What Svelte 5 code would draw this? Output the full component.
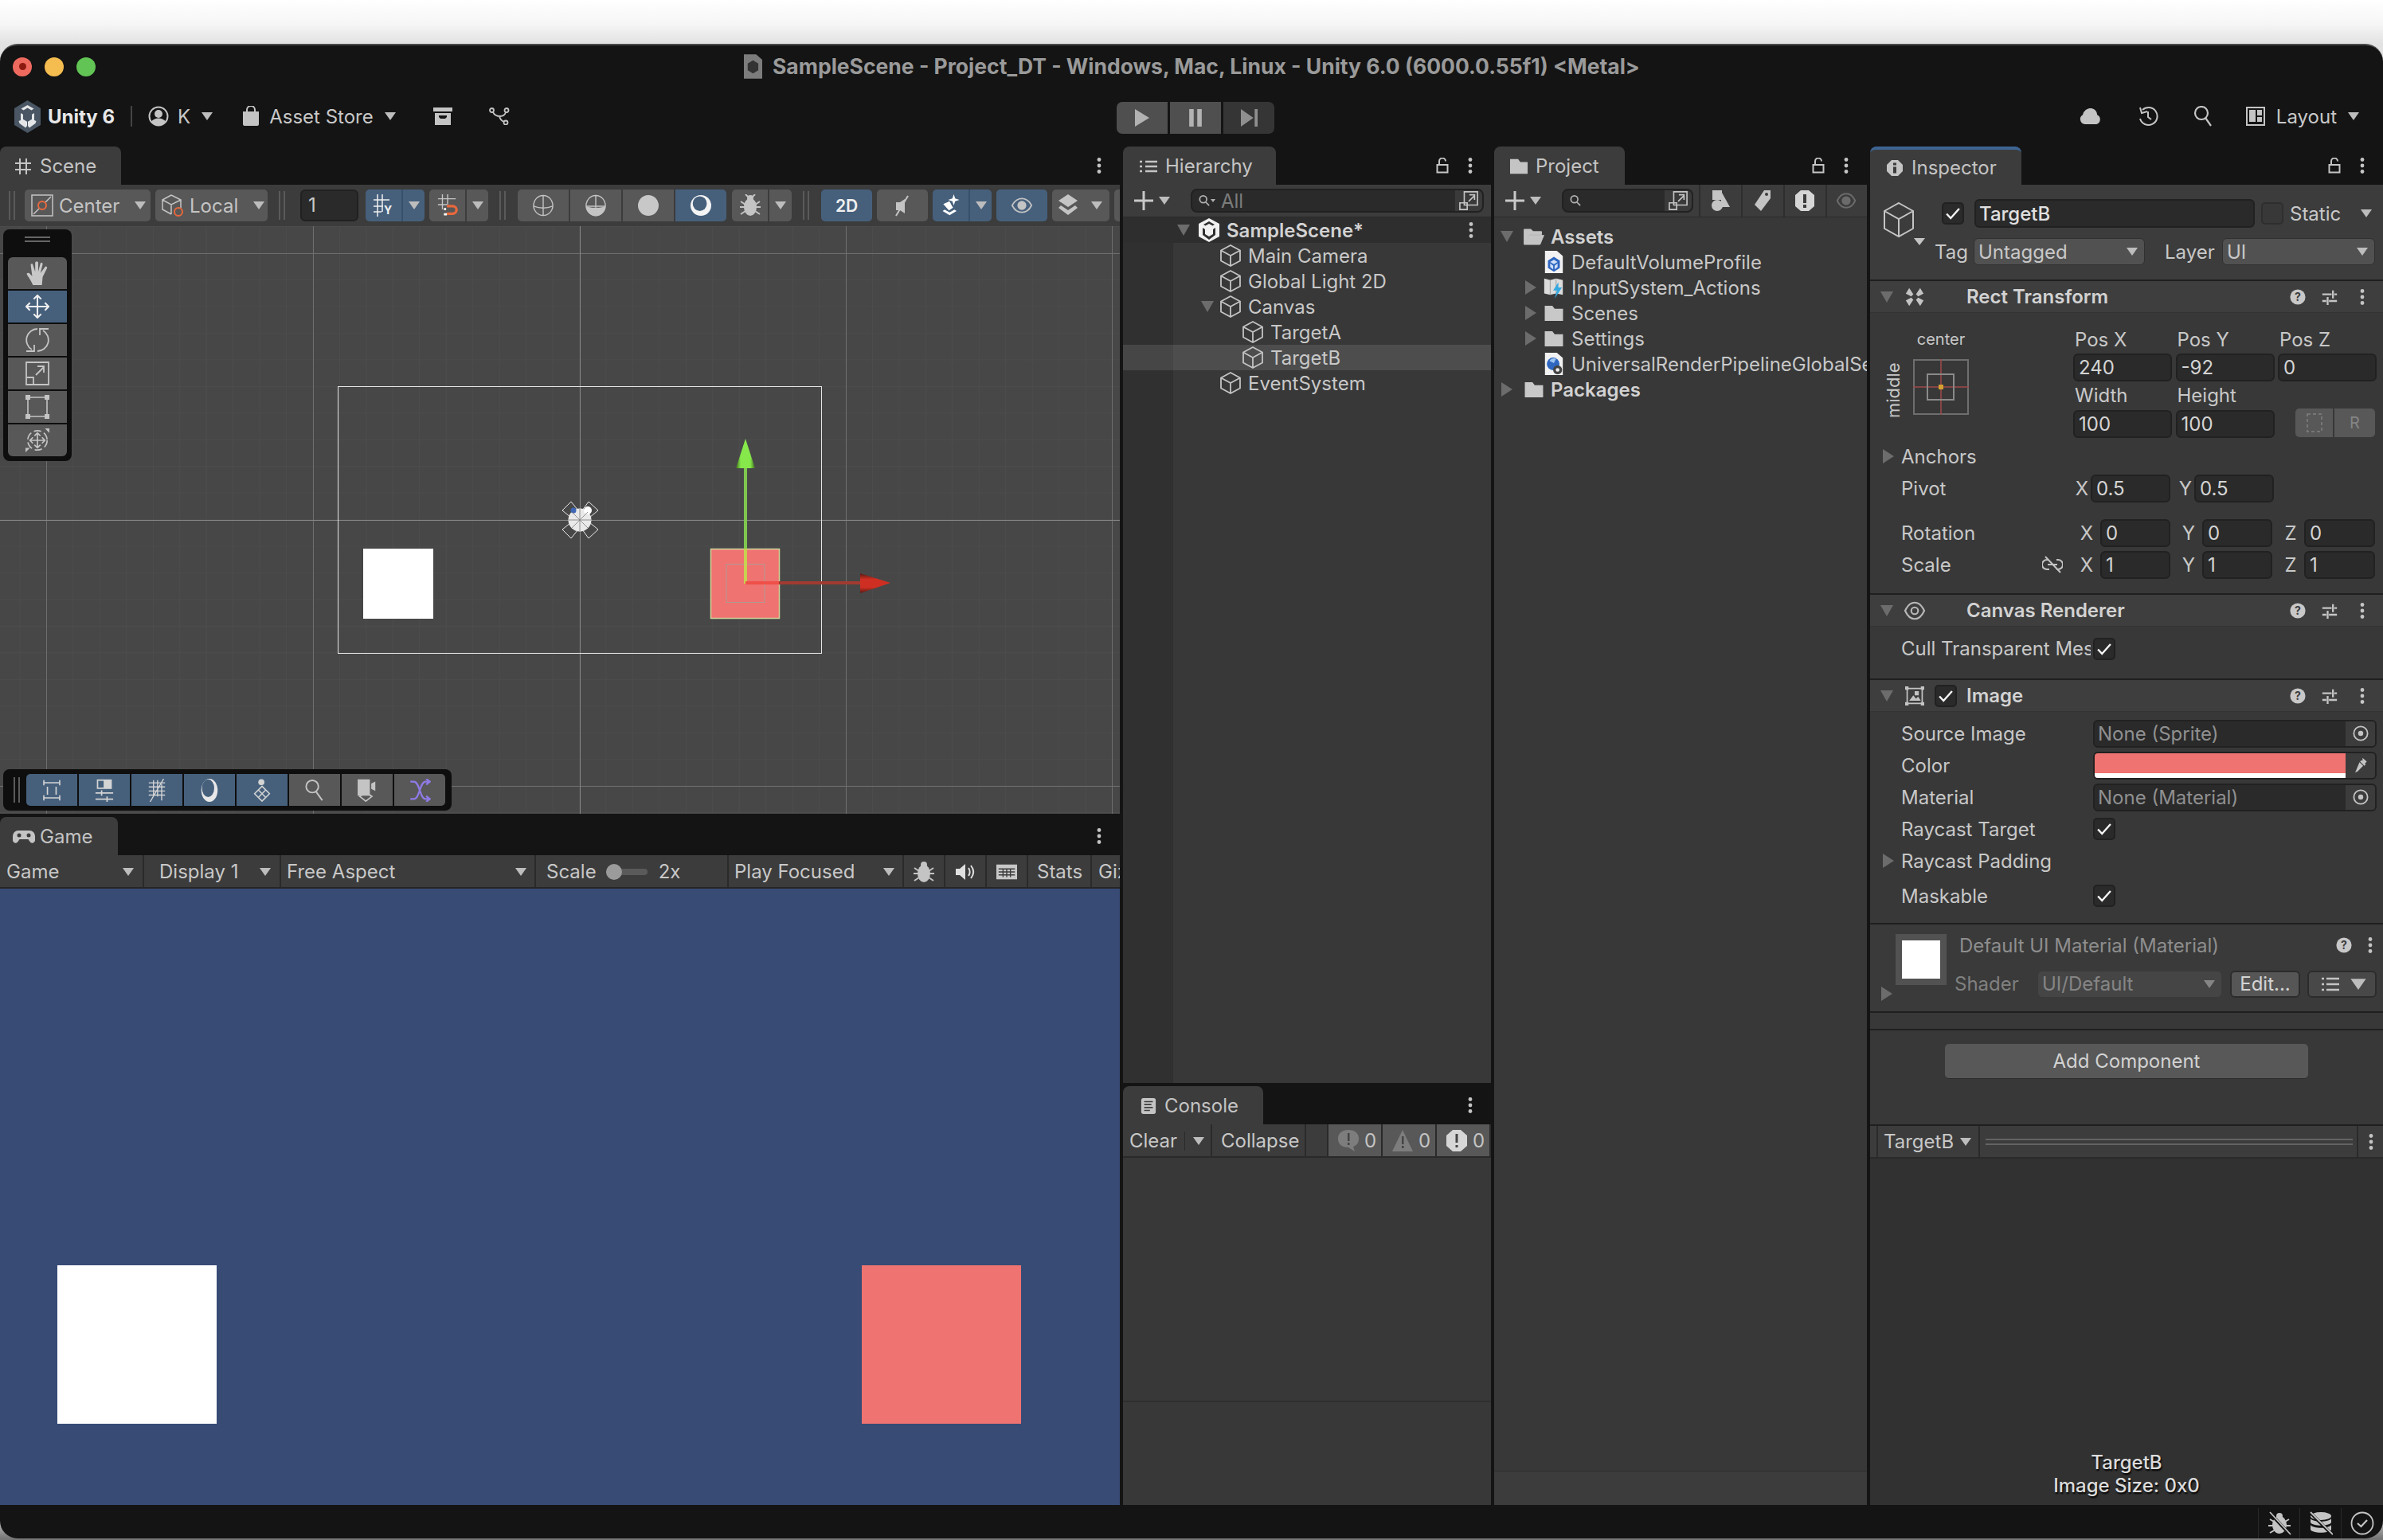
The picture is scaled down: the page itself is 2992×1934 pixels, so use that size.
<script>
	const W = 1406;
	const H = 738;
	// scene grid, 33.45px minor pitch
	const minorX = Array.from({ length: 44 }, (_, i) => 25.05 + i * 33.45);
	const minorY = Array.from({ length: 24 }, (_, i) => 0.6 + i * 33.45);
	const majorX = [58.5, 393.5, 1062.5, 1396.5];
	const majorY = [34.5, 703.5];

	const hierarchy = [
		{ name: 'Main Camera', depth: 1 },
		{ name: 'Global Light 2D', depth: 1 },
		{ name: 'Canvas', depth: 1, open: true },
		{ name: 'TargetA', depth: 2 },
		{ name: 'TargetB', depth: 2, selected: true },
		{ name: 'EventSystem', depth: 1 }
	];
</script>

{#snippet tri()}
	<svg class="tri" viewBox="0 0 16 12"><path d="M1 1h14L8 11z" /></svg>
{/snippet}

{#snippet arrowDown()}
	<svg class="arrow" viewBox="0 0 16 18"><path d="M0 2h16L8 16z" /></svg>
{/snippet}

{#snippet arrowRight()}
	<svg class="arrow" viewBox="0 0 16 18"><path d="M1 0l14 9L1 18z" /></svg>
{/snippet}

{#snippet dots()}
	<svg class="dots" viewBox="0 0 6 20"><circle cx="3" cy="2.500" r="2.400" /><circle cx="3" cy="10" r="2.400" /><circle cx="3" cy="17.500" r="2.400" /></svg>
{/snippet}

{#snippet lock()}
	<svg class="lock" viewBox="0 0 16 20"><path d="M4 8V4.500a4 4 0 0 1 8 0M1.500 9h13v9.500h-13z" /></svg>
{/snippet}

{#snippet cube()}
	<svg class="cube" viewBox="0 0 28 30"><path d="M14 2l12 6.500v13L14 28 2 21.500v-13zM2 8.500L14 15l12-6.500M14 15v13" /></svg>
{/snippet}

{#snippet check()}
	<svg class="check" viewBox="0 0 28 28"><path d="M5.500 14.500l5.500 6L22.500 7.500" /></svg>
{/snippet}

{#snippet help()}
	<svg class="help" viewBox="0 0 24 24"><circle cx="12" cy="12" r="11.500" /><text x="12" y="18.500" text-anchor="middle">?</text></svg>
{/snippet}

{#snippet sliders()}
	<svg class="sliders" viewBox="0 0 24 24"><path d="M1 8h14M19 8h4M1 18h6M11 18h12M17 2v12M9 12v12" /></svg>
{/snippet}

{#snippet target()}
	<svg class="target" viewBox="0 0 22 22"><circle cx="11" cy="11" r="9.500" /><circle class="pt" cx="11" cy="11" r="3.500" /></svg>
{/snippet}

{#snippet search()}
	<svg class="ticon" viewBox="0 0 16 16"><circle cx="6.500" cy="6" r="5" /><path d="M10 10l5 5" /></svg>
{/snippet}

{#snippet expand()}
	<svg class="expand" viewBox="0 0 26 26"><path d="M7 1h18v18H7zM1 16h10v9H1zM13 14l8-8M14 5h7v7" /></svg>
{/snippet}

{#snippet folder()}
	<svg class="ficon" viewBox="0 0 26 22"><path d="M1 1h10l3 4h11v16H1z" /></svg>
{/snippet}

{#snippet unityMark(back, fore)}
	<polygon points="16.500,0 33,10 33,31 16.500,41 0,31 0,10" fill={back} />
	<path d="M16.500 6l8 4.500-3 2-5-3-5 3-3-2zM8 16l3 1.800v6l5 3V32l-1.800 2.500L6.500 29 5.500 26l2.500-1zM25 16l-3 1.800v6l-5 3V32l1.800 2.500 7.700-5.500 1-3-2.500-1z" fill={fore} />
{/snippet}

{#snippet tabMenu()}
	<div class="tab-tools">
		{@render lock()}
		{@render dots()}
	</div>
{/snippet}

<div class="window">
	<header class="titlebar">
		<div class="lights">
			<span class="light red"><i></i></span>
			<span class="light yellow"></span>
			<span class="light green"></span>
		</div>
		<div class="title">
			<svg class="doc" viewBox="0 0 24 32">
				<path d="M0 0h16l8 7v25H0z" fill="#7c7c7c" />
				<g transform="translate(5 8) scale(.42)"><polygon points="16.500,0 33,10 33,31 16.500,41 0,31 0,10" fill="#333" /></g>
			</svg>
			<span>SampleScene - Project_DT - Windows, Mac, Linux - Unity 6.0 (6000.0.55f1) &lt;Metal&gt;</span>
		</div>
	</header>

	<div class="toolbar">
		<div class="tb-left">
			<svg class="logo" viewBox="0 0 33 41">{@render unityMark('#4a5663', '#e4e6e8')}</svg>
			<span class="brand">Unity 6</span>
			<span class="vsep"></span>
			<svg class="acct" viewBox="0 0 26 26">
				<circle cx="13" cy="13" r="11.500" fill="none" stroke="#c4c4c4" stroke-width="2" />
				<circle cx="13" cy="10" r="5" fill="#c4c4c4" />
				<path d="M4 20c3-6 15-6 18 0l-4 4H8z" fill="#c4c4c4" />
			</svg>
			<span class="acct-k">K</span>
			{@render tri()}
			<svg class="bag" viewBox="0 0 20 24"><path d="M5 7V4a5 5 0 0 1 10 0v3" fill="none" stroke="#c4c4c4" stroke-width="2" /><path d="M0 6h20v16a2 2 0 0 1-2 2H2a2 2 0 0 1-2-2z" fill="#c4c4c4" /></svg>
			<span class="store">Asset Store</span>
			{@render tri()}
			<svg class="archive" viewBox="0 0 24 22"><path d="M0 0h24v5H0zM2 7h20v15H2z" fill="#c4c4c4" /><path d="M7 10h10v2l-2 2H9l-2-2z" fill="#141414" /></svg>
			<svg class="graph" viewBox="0 0 26 22" fill="none" stroke="#c4c4c4" stroke-width="1.800"><circle cx="3.500" cy="3.500" r="2.500" /><circle cx="22" cy="3.500" r="2.500" /><circle cx="21" cy="19" r="2.500" /><path d="M5 6c2 4 5 5 9 5 3 0 6-2 7-5M13 11c1 4 3 6 6 7" /></svg>
		</div>
		<div class="play">
			<button class="pb"><svg viewBox="0 0 16 16" preserveAspectRatio="none"><path d="M0 0l16 8-16 8z" /></svg></button>
			<button class="pb"><svg viewBox="0 0 16 16" preserveAspectRatio="none"><path d="M1 0h5v16H1zM10 0h5v16h-5z" /></svg></button>
			<button class="pb dim"><svg viewBox="0 0 20 16" preserveAspectRatio="none"><path d="M0 0l15 8-15 8zM16.500 0H20v16h-3.500z" /></svg></button>
		</div>
		<div class="tb-right">
			<svg class="cloud" viewBox="0 0 30 22"><path d="M7 22a7 7 0 0 1-3-13A11 11 0 0 1 16 0a10 10 0 0 1 8 9 7 7 0 0 1-1 13z" fill="#c4c4c4" /></svg>
			<svg class="hist" viewBox="0 0 26 26" fill="none" stroke="#c4c4c4" stroke-width="2"><path d="M6 5a11 11 0 1 1-3 11M3 2l2 7 7-2M13 7v7l4 3" /></svg>
			<svg class="mag" viewBox="0 0 26 26" fill="none" stroke="#c4c4c4" stroke-width="2.200"><circle cx="10" cy="9" r="8" /><path d="M15 15l7 10" /></svg>
			<svg class="layout" viewBox="0 0 24 24"><path d="M1 1h22v22H1z" fill="none" stroke="#c4c4c4" stroke-width="2" /><path d="M4 4h8v15H4zM14 4h6v7h-6zM14 13h6v6h-6z" fill="#c4c4c4" /></svg>
			<span class="lay-text">Layout</span>
			{@render tri()}
		</div>
	</div>

	<div class="main">
		<div class="col col-left">
			<section class="panel scene">
				<div class="tabrow">
					<div class="tab tab-scene">
						<svg class="tab-ic" viewBox="0 0 20 20" fill="none" stroke="#c4c4c4" stroke-width="2"><path d="M6 0v20M14 0v20M0 6h20M0 14h20" /></svg>
						<span>Scene</span>
					</div>
					<div class="tab-tools">{@render dots()}</div>
				</div>
				<div class="scene-tools">
					<span class="handle"></span>
					<button class="sb w-center">
						<svg class="pad-ic" viewBox="0 0 28 28" fill="none"><rect x="1" y="1" width="26" height="26" stroke="#c4c4c4" stroke-width="1.500" /><path d="M3 25l7-7M18 10l7-7" stroke="#c4c4c4" stroke-width="1.500" /><circle cx="14" cy="14" r="5" stroke="#e8683c" stroke-width="2" /></svg>
						<span>Center</span>{@render tri()}
					</button>
					<button class="sb w-local">
						<svg class="pad-ic" viewBox="0 0 28 28" fill="none" stroke="#c4c4c4" stroke-width="1.500"><path d="M12 1l12 6v10M12 1L1 7v12l11 6M1 7l11 6 12-6M12 13v12" /><circle cx="21" cy="22" r="5" stroke="#e8683c" stroke-width="2" /></svg>
						<span>Local</span>{@render tri()}
					</button>
					<span class="handle"></span>
					<div class="num-input">1</div>
					<div class="split on w-snap ml3">
						<span class="sp-main">
							<svg class="sq-ic" viewBox="0 0 26 28" fill="none" stroke="#f0f0f0" stroke-width="1.500"><path d="M5 0v28M11 0v22M0 7h20M0 15h12M0 22h10" /><text x="13" y="25" class="y">Y</text></svg>
						</span>
						<span class="sp-tri">{@render tri()}</span>
					</div>
					<div class="split w-snap">
						<span class="sp-main">
							<svg class="sq-ic" viewBox="0 0 26 30" fill="none"><path d="M6 0v20M13 0v14M0 6h24M0 14h12" stroke="#c4c4c4" stroke-width="1.500" /><path d="M12 16h8a5 5 0 0 1 0 10h-8" stroke="#e8683c" stroke-width="3.500" /><path d="M8 20h3M8 27h4" stroke="#fff" stroke-width="3" /></svg>
						</span>
						<span class="sp-tri">{@render tri()}</span>
					</div>
					<span class="handle"></span>
					<div class="group">
						<button class="gb"><svg class="sq-ic" viewBox="0 0 28 28" fill="none" stroke="#c4c4c4" stroke-width="1.500"><ellipse cx="14" cy="14" rx="13" ry="13.500" /><path d="M1 15c8 3 18 3 26 0M14 1v26" /></svg></button>
						<button class="gb"><svg class="sq-ic" viewBox="0 0 28 28"><path d="M1 15c8 3 18 3 26 0a13 13.500 0 0 1-26 0z" fill="#c4c4c4" /><path d="M11 17v10h6V17z" fill="#c4c4c4" /><ellipse cx="14" cy="14" rx="13" ry="13.500" fill="none" stroke="#c4c4c4" stroke-width="1.500" /><path d="M14 1v16M1 15h26" stroke="#c4c4c4" stroke-width="1.500" /></svg></button>
						<button class="gb"><svg class="sq-ic" viewBox="0 0 28 28"><ellipse cx="14" cy="14" rx="14" ry="14" fill="#c8c8c8" /></svg></button>
						<button class="gb on"><svg class="sq-ic" viewBox="0 0 28 28"><ellipse cx="14" cy="14" rx="14" ry="14" fill="#f4f4f4" /><ellipse cx="12.500" cy="11.500" rx="9.500" ry="10" fill="#46607c" /></svg></button>
					</div>
					<div class="split w-bug ml1">
						<span class="sp-main">
							<svg class="sq-ic" viewBox="0 0 26 28"><ellipse cx="13" cy="16" rx="8" ry="11" fill="#c4c4c4" /><circle cx="13" cy="5" r="4" fill="#c4c4c4" /><path d="M1 9l6 4M25 9l-6 4M0 16h6M26 16h-6M1 25l6-4M25 25l-6-4M7 0l3 3M19 0l-3 3" stroke="#c4c4c4" stroke-width="2" /></svg>
						</span>
						<span class="sp-tri">{@render tri()}</span>
					</div>
					<span class="handle"></span>
					<button class="sb on sq sb-text">2D</button>
					<button class="sb sq"><svg class="sq-ic" viewBox="0 0 24 28"><path d="M4 10h5l6-4v18l-6-4H4z" fill="#c4c4c4" /><path d="M19 2L4 27" stroke="#c4c4c4" stroke-width="2" /></svg></button>
					<div class="split on w-snap">
						<span class="sp-main">
							<svg class="sq-ic" viewBox="0 0 26 32"><path d="M17 0l2 6 6 2-6 2-2 6-2-6-6-2 6-2z" fill="#fff" /><path d="M2 14l9-4 3 6 2 3-6 4zM1 24l10 6 10-6-3-2-7 4-7-4z" fill="#fff" /></svg>
						</span>
						<span class="sp-tri">{@render tri()}</span>
					</div>
					<button class="sb on sq"><svg class="sq-ic" viewBox="0 0 30 24"><path d="M1 12C5 4 10 2 15 2s10 2 14 10c-4 8-9 10-14 10S5 20 1 12z" fill="none" stroke="#c4c4c4" stroke-width="2" /><circle cx="15" cy="12" r="6.500" fill="#c4c4c4" /></svg></button>
					<div class="split w-lay">
						<span class="sp-main pl"><svg class="sq-ic" viewBox="0 0 24 28"><path d="M12 0l12 8-12 8L0 8zM3 14l9 6 9-6 3 3-12 9L0 17z" fill="#c4c4c4" /></svg></span>
						<span class="sp-tri nosep">{@render tri()}</span>
					</div>
					<button class="sb sq"></button>
				</div>
				<div class="canvas">
					<svg class="gridsvg" viewBox="0 0 {W} {H}">
						<defs>
							<linearGradient id="coneG" x1="0" x2="1" y1="0" y2="0">
								<stop offset="0" stop-color="#3e6a20" />
								<stop offset=".25" stop-color="#86e84a" />
								<stop offset=".75" stop-color="#86e84a" />
								<stop offset="1" stop-color="#3e6a20" />
							</linearGradient>
							<linearGradient id="coneR" x1="0" x2="0" y1="0" y2="1">
								<stop offset="0" stop-color="#551a14" />
								<stop offset=".3" stop-color="#cf2f22" />
								<stop offset=".7" stop-color="#cf2f22" />
								<stop offset="1" stop-color="#551a14" />
							</linearGradient>
						</defs>
						{#each minorX as x}<line x1={x} x2={x} y1="0" y2={H} class="minor" />{/each}
						{#each minorY as y}<line y1={y} y2={y} x1="0" x2={W} class="minor" />{/each}
						{#each majorX as x}<line x1={x} x2={x} y1="0" y2={H} class="major" />{/each}
						{#each majorY as y}<line y1={y} y2={y} x1="0" x2={W} class="major" />{/each}
						<line x1="728.500" x2="728.500" y1="0" y2={H} class="axis" />
						<line y1="369.500" y2="369.500" x1="0" x2={W} class="axis" />

						<rect x="424.500" y="201.500" width="607" height="335" fill="none" stroke="#e6e6e6" stroke-width="1" />
						<rect x="456" y="405" width="88" height="88" fill="#fff" />

						<!-- directional light gizmo -->
						<g fill="none" stroke="#e8e8e8" stroke-width="1">
							<path d="M717 346l-11 11 11 9 9-9zM739 346l12 11-11 9-9-9zM717 392l-11-11 11-9 9 9zM739 392l12-11-11-9-9 9z" />
						</g>
						<circle cx="728" cy="369" r="14.500" fill="#e9e9e9" />
						<circle cx="720" cy="357" r="3.500" fill="#3d66b5" />
						<circle cx="738" cy="357" r="5" fill="#fff" />
						<path d="M728 355v28M714 369h28M718 359l20 20M738 359l-20 20" stroke="#7a7a7a" stroke-width=".8" />

						<rect x="892.500" y="405.500" width="86" height="87" fill="#ef7370" stroke="#cfd59a" stroke-width="1.500" />
						<rect x="912" y="424.500" width="48" height="48" fill="none" stroke="#b09a94" stroke-width="1" />
						<rect x="934" y="304" width="4" height="145" fill="#7fc64e" />
						<rect x="934" y="405" width="4" height="44" fill="#c8d050" />
						<path d="M936 267l12 37h-24z" fill="url(#coneG)" />
						<rect x="936" y="446" width="145" height="4" fill="#a13a31" />
						<rect x="936" y="446" width="42" height="4" fill="#ef5048" />
						<path d="M1118 448l-38 13v-25z" fill="url(#coneR)" />
					</svg>

					<div class="vtools">
						<div class="grip"></div>
						<button class="vt">
							<svg viewBox="0 0 30 32"><path d="M9 32c-2-5-4-8-8-14-1-2 1-3 3-2l4 4L6 5c0-2 3-2 3 0l3 9V2c0-2 4-2 4 0v12l3-11c1-2 3-1 3 1l-3 12 6-8c1-2 3-1 3 1l-6 12-1 11z" fill="#c8c8c8" /></svg>
						</button>
						<button class="vt on">
							<svg viewBox="0 0 32 32" fill="none" stroke="#f0f0f0" stroke-width="2.200"><path d="M16 1v30M1 16h30M11 6l5-5 5 5M11 26l5 5 5-5M6 11l-5 5 5 5M26 11l5 5-5 5" /></svg>
						</button>
						<button class="vt">
							<svg viewBox="0 0 30 30" fill="none" stroke="#c4c4c4" stroke-width="1.800"><path d="M15 29a14 14 0 0 0 7-26M29 1H18v8M15 1A14 14 0 0 0 8 27M1 29h10v-8" /></svg>
						</button>
						<button class="vt">
							<svg viewBox="0 0 30 30" fill="none" stroke="#c4c4c4" stroke-width="1.800"><path d="M1 1h28v28H1zM1 20h9v9M13 17l10-10M15 6h8v8" /></svg>
						</button>
						<button class="vt">
							<svg viewBox="0 0 30 30"><path d="M6 3h18M6 27h18M3 6v18M27 6v18" stroke="#c4c4c4" stroke-width="1.600" /><path d="M0 0h6v6H0zM24 0h6v6h-6zM0 24h6v6H0zM24 24h6v6h-6z" fill="#c4c4c4" /></svg>
						</button>
						<button class="vt">
							<svg viewBox="0 0 32 32" fill="none" stroke="#c4c4c4" stroke-width="1.800"><circle cx="16" cy="16" r="13" stroke-dasharray="10 4" /><path d="M16 6v20M6 16h20M12 10l4-4 4 4M12 22l4 4 4-4M10 12l-4 4 4 4M22 12l4 4-4 4" /><path d="M26 0h6v6zM0 32v-6h6z" fill="#c4c4c4" stroke="none" /></svg>
						</button>
					</div>

					<div class="htools">
						<span class="handle tight"></span>
						<button class="ht on"><svg viewBox="0 0 30 32" fill="none" stroke="#d4d4d4" stroke-width="1.800"><path d="M4 2v7M26 2v7M4 5.500h22M4 23v7M26 23v7M4 26.500h22M9 11v11M21 11v11" /></svg></button>
						<button class="ht on"><svg viewBox="0 0 30 34"><path d="M4 1h22v14H4z" fill="#d4d4d4" /><path d="M6 3h8v10H6z" fill="#46607c" /><path d="M2 21h26M2 30h26M11 17v8M19 26v8" stroke="#d4d4d4" stroke-width="2" /></svg></button>
						<button class="ht on"><svg viewBox="0 0 30 34" fill="none" stroke="#d4d4d4" stroke-width="1.600"><path d="M3 6h24M3 12h24M3 18h24M3 24h24M10 2v22M16 2v24M22 8v24M25 0L5 34" /></svg></button>
						<button class="ht on"><svg viewBox="0 0 24 34"><ellipse cx="12" cy="17" rx="12" ry="17" fill="#e8e8e8" /><ellipse cx="10" cy="14" rx="9" ry="13" fill="#46607c" /></svg></button>
						<button class="ht on"><svg viewBox="0 0 30 34"><circle cx="14" cy="5" r="4.500" fill="#d4d4d4" /><path d="M15 11l11 11-11 11L4 22zM9.500 16.500l11 11M20.500 16.500l-11 11" fill="none" stroke="#d4d4d4" stroke-width="1.800" /></svg></button>
						<button class="ht"><svg viewBox="0 0 26 30" fill="none" stroke="#c4c4c4" stroke-width="2"><circle cx="10" cy="10" r="8" /><path d="M15 17l8 11" /></svg></button>
						<button class="ht"><svg viewBox="0 0 28 34"><path d="M0 1h18v24H0zM20 7l6-3v14l-6-3z" fill="#c4c4c4" /><path d="M12 20l9 6-9 7-9-7z" fill="none" stroke="#c4c4c4" stroke-width="2" /></svg></button>
						<button class="ht"><svg viewBox="0 0 30 32" fill="none" stroke="#8f7ae6" stroke-width="2.500"><path d="M2 4h5c8 0 8 24 16 24h5M2 28h5c8 0 8-24 16-24h5M24 0l5 4-5 4M24 24l5 4-5 4" /></svg></button>
					</div>
				</div>
			</section>

			<section class="panel game">
				<div class="tabrow">
					<div class="tab tab-game">
						<svg class="tab-ic" viewBox="0 0 28 16"><path d="M7 0h14a7 7 0 0 1 7 7v5a3.500 3.500 0 0 1-6.500 2l-2-3h-11l-2 3A3.500 3.500 0 0 1 0 12V7a7 7 0 0 1 7-7z" fill="#c4c4c4" /><circle cx="8" cy="6" r="2.500" fill="#3c3c3c" /><circle cx="20" cy="6" r="2.500" fill="#3c3c3c" /></svg>
						<span>Game</span>
					</div>
					<div class="tab-tools">{@render dots()}</div>
				</div>
				<div class="game-tools">
					<div class="gt g-game"><span>Game</span>{@render tri()}</div>
					<div class="gt g-display"><span>Display 1</span>{@render tri()}</div>
					<div class="gt g-aspect"><span>Free Aspect</span>{@render tri()}</div>
					<div class="gt g-scale">
						<span>Scale</span>
						<span class="slider"><i></i></span>
						<span>2x</span>
					</div>
					<div class="gt g-focus"><span>Play Focused</span>{@render tri()}</div>
					<div class="gt g-ic">
						<svg class="sq-ic" viewBox="0 0 26 28"><ellipse cx="13" cy="16" rx="8" ry="11" fill="#c4c4c4" /><circle cx="13" cy="5" r="4" fill="#c4c4c4" /><path d="M1 9l6 4M25 9l-6 4M0 16h6M26 16h-6M1 25l6-4M25 25l-6-4" stroke="#c4c4c4" stroke-width="2" /></svg>
					</div>
					<div class="gt g-ic">
						<svg class="mini-ic" viewBox="0 0 26 20"><path d="M1 6h5l7-6v20l-7-6H1z" fill="#e0e0e0" /><path d="M17 5c2 3 2 7 0 10M20 2c4 5 4 11 0 16" stroke="#e0e0e0" stroke-width="2" fill="none" /></svg>
					</div>
					<div class="gt g-ic">
						<svg class="mini-ic" viewBox="0 0 28 20"><path d="M0 0h28v20H0z" fill="#c8c8c8" /><path d="M3 6h22M3 10h22M3 14h22M9 6v11M14 6v11M19 6v11" stroke="#3c3c3c" stroke-width="1.500" /></svg>
					</div>
					<div class="gt g-stats"><span>Stats</span></div>
					<div class="gt g-giz"><span>Gizmos</span></div>
				</div>
				<div class="gameview">
					<div class="gbox white"></div>
					<div class="gbox coral"></div>
				</div>
			</section>
		</div>

		<div class="col col-hier">
			<section class="panel hier">
				<div class="tabrow">
					<div class="tab tab-hier">
						<svg class="tab-ic small" viewBox="0 0 22 16"><path d="M0 2h3M0 8h3M0 14h3M7 2h15M7 8h15M7 14h15" stroke="#c4c4c4" stroke-width="2.500" /></svg>
						<span>Hierarchy</span>
					</div>
					{@render tabMenu()}
				</div>
				<div class="tree-tools">
					<svg class="plus" viewBox="0 0 24 24"><path d="M10.500 0h3v10.500H24v3H13.500V24h-3V13.500H0v-3h10.500z" /></svg>
					{@render tri()}
					<div class="searchbox">
						{@render search()}
						<svg class="tinytri" viewBox="0 0 6 6"><path d="M0 1h6L3 5z" /></svg>
						<span class="ph">All</span>
						<span class="sb-end">{@render expand()}</span>
					</div>
				</div>
				<div class="hier-tree">
					<div class="scene-row">
						{@render arrowDown()}
						<svg class="scene-ic" viewBox="0 0 28 30"><path d="M14 0l13 7v16L14 30 1 23V7z" fill="#f0f0f0" /><path d="M14 4l7 4-2.500 1.500-4.500-2.500-4.500 2.500L7 8zM6 12l3 2v6l5 3 5-3v-6l3-2v9l-8 6-8-6z" fill="#2e2e2e" /></svg>
						<b>SampleScene*</b>
						{@render dots()}
					</div>
					{#each hierarchy as item}
						<div class="hrow d{item.depth}" class:selected={item.selected}>
							<span class="arrow-box">
								{#if item.open}{@render arrowDown()}{/if}
							</span>
							{@render cube()}
							<span>{item.name}</span>
						</div>
					{/each}
				</div>
			</section>

			<section class="panel console">
				<div class="tabrow">
					<div class="tab tab-console">
						<svg class="tab-ic small" viewBox="0 0 20 22"><rect width="20" height="22" rx="3" fill="#c4c4c4" /><path d="M4 5h12M4 9h10M4 13h12M4 17h8" stroke="#3c3c3c" stroke-width="1.800" /></svg>
						<span>Console</span>
					</div>
					<div class="tab-tools">{@render dots()}</div>
				</div>
				<div class="console-tools">
					<div class="ct c-clear"><span>Clear</span><i></i>{@render tri()}</div>
					<div class="ct c-coll"><span>Collapse</span></div>
					<div class="ct c-gap"></div>
					<div class="ct c-on">
						<svg class="log-ic" viewBox="0 0 26 27"><path d="M13 0C5 0 0 4 0 11s5 11 13 11l8 5-2-6c5-2 7-5 7-10 0-7-5-11-13-11z" fill="#7d7d7d" /><path d="M12 4h2.500v10H12zM12 16h2.500v3H12z" fill="#444" /></svg>
						<span>0</span>
					</div>
					<div class="ct c-on">
						<svg class="log-ic" viewBox="0 0 26 27"><path d="M13 0l13 27H0z" fill="#7d7d7d" /><path d="M12 8h2.500v10H12zM12 20h2.500v3H12z" fill="#444" /></svg>
						<span>0</span>
					</div>
					<div class="ct c-on">
						<svg class="log-ic" viewBox="0 0 26 27"><path d="M8 0h10l8 7v13l-8 7H8l-8-7V7z" fill="#d6d6d6" /><path d="M11.500 5h3v11h-3zM11.500 19h3v3h-3z" fill="#444" /></svg>
						<span>0</span>
					</div>
				</div>
				<div class="console-list"></div>
				<div class="console-detail"></div>
			</section>
		</div>

		<div class="col col-proj">
			<section class="panel project">
				<div class="tabrow">
					<div class="tab tab-proj">
						<svg class="tab-ic small" viewBox="0 0 24 20"><path d="M0 0h11l3 4h10v16H0z" fill="#c4c4c4" /></svg>
						<span>Project</span>
					</div>
					{@render tabMenu()}
				</div>
				<div class="tree-tools">
					<svg class="plus" viewBox="0 0 24 24"><path d="M10.500 0h3v10.500H24v3H13.500V24h-3V13.500H0v-3h10.500z" /></svg>
					{@render tri()}
					<div class="searchbox short">
						{@render search()}
						<span class="sb-end">{@render expand()}</span>
					</div>
					<span class="pj-ic first"><svg viewBox="0 0 24 26"><path d="M2 0h12v12H2zM14 3l10 18H12z" fill="#c4c4c4" /><circle cx="8" cy="19" r="7" fill="#c4c4c4" /></svg></span>
					<span class="pj-ic"><svg viewBox="0 0 24 26"><path d="M14 0h8v10L10 26 2 18z" fill="#c4c4c4" /><circle cx="17" cy="5" r="2" fill="#3c3c3c" /></svg></span>
					<span class="pj-ic"><svg viewBox="0 0 24 26"><path d="M7 0h10l7 6v14l-7 6H7l-7-6V6z" fill="#d6d6d6" /><path d="M10 5h4v11h-4zM10 18h4v4h-4z" fill="#3c3c3c" /></svg></span>
					<span class="pj-ic eye"><svg viewBox="0 0 30 26"><path d="M1 13C5 4 10 2 15 2s10 2 14 11c-4 9-9 11-14 11S5 22 1 13z" fill="none" stroke="#6b6b6b" stroke-width="2.500" /><circle cx="15" cy="13" r="7" fill="#6b6b6b" /></svg></span>
				</div>
				<div class="proj-tree">
					<div class="prow-t top">
						<span class="arrow-box">{@render arrowDown()}</span>
						<svg class="ficon" viewBox="0 0 28 22"><path d="M1 1h9l3 3h11v4H8L3 21H1zM8 9h19l-5 12H3z" fill="#c4c4c4" stroke="#c4c4c4" stroke-width="1" /></svg>
						<b>Assets</b>
					</div>
					<div class="prow-t sub">
						<span class="arrow-box"></span>
						<svg class="asset-ic" viewBox="0 0 24 30"><path d="M0 0h16l8 7v23H0z" fill="#f2f2f2" /><path d="M12 8l8 5v10l-8 5-8-5V13z" fill="#2e66c0" /><path d="M12 12l5 3-5 3-5-3zM7 17l4 3v5l-4-3zM17 17l-4 3v5l4-3z" fill="#cfe0f8" /></svg>
						<span>DefaultVolumeProfile</span>
					</div>
					<div class="prow-t sub">
						<span class="arrow-box">{@render arrowRight()}</span>
						<svg class="asset-ic" viewBox="0 0 28 30"><path d="M1 3l8 2 8-2 9 2v20l-9-2-8 2-8-2z" fill="#dcdcdc" /><path d="M9 5v20M17 3v20" stroke="#9a9a9a" /><path d="M20 8l-7 11h5l-3 11 10-15h-5z" fill="#36a8e0" /></svg>
						<span>InputSystem_Actions</span>
					</div>
					<div class="prow-t sub">
						<span class="arrow-box">{@render arrowRight()}</span>
						{@render folder()}
						<span>Scenes</span>
					</div>
					<div class="prow-t sub">
						<span class="arrow-box">{@render arrowRight()}</span>
						{@render folder()}
						<span>Settings</span>
					</div>
					<div class="prow-t sub">
						<span class="arrow-box"></span>
						<svg class="asset-ic" viewBox="0 0 24 30"><path d="M0 0h16l8 7v23H0z" fill="#f2f2f2" /><circle cx="11" cy="15" r="8.500" fill="#2e66c0" /><path d="M6 11a7 7 0 0 1 9-3l-3 6z" fill="#9cc4f0" /><circle cx="17" cy="23" r="6" fill="#444" /><circle cx="17" cy="23" r="2.500" fill="#eee" /></svg>
						<span>UniversalRenderPipelineGlobalSettings</span>
					</div>
					<div class="prow-t top">
						<span class="arrow-box">{@render arrowRight()}</span>
						{@render folder()}
						<b>Packages</b>
					</div>
				</div>
				<div class="proj-bottom"></div>
			</section>
		</div>

		<div class="col col-insp">
			<section class="panel insp">
				<div class="tabrow">
					<div class="tab tab-insp">
						<svg class="tab-ic small" viewBox="0 0 20 20"><path d="M6 0h8l6 6v8l-6 6H6l-6-6V6z" fill="#c4c4c4" /><path d="M8 3.500h4v3H8zM8 8.500h4v8H8z" fill="#3c3c3c" /></svg>
						<span>Inspector</span>
					</div>
					{@render tabMenu()}
				</div>
				<div class="obj-head">
					<svg class="obj-cube" viewBox="0 0 54 56" fill="none">
						<path d="M20 2l18 10v22L20 44 2 34V12zM2 12l18 10 18-10M20 22v22" stroke="#c4c4c4" stroke-width="2" />
						<path d="M39 46h14l-7 9z" fill="#c4c4c4" />
					</svg>
					<div class="obj-fields">
						<div class="obj-row">
							<span class="cb">{@render check()}</span>
							<div class="name-input">TargetB</div>
							<span class="cb empty"></span>
							<span class="static">Static</span>
							{@render tri()}
						</div>
						<div class="obj-row second">
							<span class="lbl-tag">Tag</span>
							<div class="dd dd-tag"><span>Untagged</span>{@render tri()}</div>
							<span class="lbl-layer">Layer</span>
							<div class="dd dd-layer"><span>UI</span>{@render tri()}</div>
						</div>
					</div>
				</div>

				<div class="sep"></div>
				<div class="chead">
					{@render arrowDown()}
					<svg class="comp-ic" viewBox="0 0 28 28"><path d="M6 1l6 9-3 3-8-4zM22 1l-6 9 3 3 8-4zM6 27l6-9-3-3-8 4zM22 27l-6-9 3-3 8 4z" fill="#c4c4c4" /></svg>
					<b class="ctitle gap-noc">Rect Transform</b>
					<span class="cicons">{@render help()}{@render sliders()}{@render dots()}</span>
				</div>
				<div class="rect-body">
					<div class="rect-top">
						<div class="preset">
							<span class="middle">middle</span>
							<div class="preset-col">
								<span class="center">center</span>
								<svg class="anchor" viewBox="0 0 70 70" fill="none">
									<rect x="1" y="1" width="68" height="68" stroke="#6e6e6e" stroke-width="2" />
									<path d="M0 35h70M35 0v70" stroke="#a04a4a" stroke-width="1.500" />
									<rect x="18" y="19" width="33" height="32" stroke="#8a8a8a" stroke-width="2" />
									<rect x="32" y="32" width="6" height="6" fill="#d6a030" />
								</svg>
							</div>
						</div>
						<div class="pos-grid">
							<span>Pos X</span><span>Pos Y</span><span>Pos Z</span>
							<div class="field">240</div><div class="field">-92</div><div class="field">0</div>
							<span>Width</span><span>Height</span><span></span>
							<div class="field">100</div><div class="field">100</div>
							<div class="blueprint">
								<span class="bp"><svg viewBox="0 0 20 24" fill="none" stroke="#808080" stroke-width="1.500" stroke-dasharray="4 3"><rect x="1" y="1" width="18" height="22" /></svg></span>
								<span class="bp r">R</span>
							</div>
						</div>
					</div>
					<div class="prow anchors">{@render arrowRight()}<span>Anchors</span></div>
					<div class="prow">
						<span class="plabel">Pivot</span>
						<span class="xl small">X</span><div class="field f100">0.5</div>
						<span class="xl small next">Y</span><div class="field f100">0.5</div>
					</div>
					<div class="prow rot">
						<span class="plabel">Rotation</span>
						<span class="xl">X</span><div class="field f88">0</div>
						<span class="xl next">Y</span><div class="field f88">0</div>
						<span class="xl next">Z</span><div class="field f89">0</div>
					</div>
					<div class="prow">
						<span class="plabel">Scale
							<svg class="chain" viewBox="0 0 26 22" fill="none" stroke="#c4c4c4" stroke-width="2"><path d="M8 5H6a6 6 0 0 0 0 12h3M18 5h2a6 6 0 0 1 0 12h-2M7 11h12M4 1l19 20" /></svg>
						</span>
						<span class="xl">X</span><div class="field f88">1</div>
						<span class="xl next">Y</span><div class="field f88">1</div>
						<span class="xl next">Z</span><div class="field f89">1</div>
					</div>
				</div>

				<div class="sep"></div>
				<div class="chead">
					{@render arrowDown()}
					<svg class="comp-ic" viewBox="0 0 32 28" fill="none" stroke="#b8b8b8" stroke-width="2.500"><path d="M2 14C6 5 11 2 16 2s10 3 14 12c-4 9-9 12-14 12S6 23 2 14z" /><circle cx="16" cy="14" r="5" /></svg>
					<b class="ctitle gap-noc">Canvas Renderer</b>
					<span class="cicons">{@render help()}{@render sliders()}{@render dots()}</span>
				</div>
				<div class="cr-body">
					<span class="cull">Cull Transparent Mesh</span>
					<span class="cb">{@render check()}</span>
				</div>

				<div class="sep"></div>
				<div class="chead">
					{@render arrowDown()}
					<svg class="comp-ic" viewBox="0 0 28 28" fill="none"><path d="M3 3h22v22H3z" stroke="#c4c4c4" stroke-width="2" /><path d="M0 0h5v5H0zM23 0h5v5h-5zM0 23h5v5H0zM23 23h5v5h-5z" fill="#c4c4c4" /><path d="M6 21l6-8 4 5 3-3 4 6zM14 7h6v6h-6z" fill="#c4c4c4" /></svg>
					<span class="cb inhead">{@render check()}</span>
					<b class="ctitle">Image</b>
					<span class="cicons">{@render help()}{@render sliders()}{@render dots()}</span>
				</div>
				<div class="img-body">
					<div class="irow">
						<span>Source Image</span>
						<div class="objfield"><span class="val">None (Sprite)</span><span class="pick">{@render target()}</span></div>
					</div>
					<div class="irow">
						<span>Color</span>
						<div class="objfield color">
							<span class="swatch"><i></i></span>
							<span class="pick"><svg class="target" viewBox="0 0 22 26"><path d="M14 1l7 6-3 3 1 2-2 2-7-7 2-2 2 1zM9 8l6 6-9 9-4 2 2-5z" fill="#c4c4c4" stroke="none" /></svg></span>
						</div>
					</div>
					<div class="irow">
						<span>Material</span>
						<div class="objfield"><span class="val">None (Material)</span><span class="pick">{@render target()}</span></div>
					</div>
					<div class="irow">
						<span>Raycast Target</span>
						<span class="cb">{@render check()}</span>
					</div>
					<div class="irow foldrow">{@render arrowRight()}<span>Raycast Padding</span></div>
					<div class="irow mask">
						<span>Maskable</span>
						<span class="cb">{@render check()}</span>
					</div>
				</div>

				<div class="sep"></div>
				<div class="mat">
					<div class="mat-left">
						{@render arrowRight()}
						<div class="thumb"><i></i></div>
					</div>
					<div class="mat-right">
						<div class="mat-title">
							<span>Default UI Material (Material)</span>
							<span class="cicons">{@render help()}{@render dots()}</span>
						</div>
						<div class="mat-shader">
							<span class="sh-label">Shader</span>
							<div class="dd sh-dd"><span>UI/Default</span>{@render tri()}</div>
							<button class="edit">Edit...</button>
							<button class="edit listb">
								<svg viewBox="0 0 22 18"><path d="M0 2h3M0 9h3M0 16h3M6 2h16M6 9h16M6 16h16" stroke="#c4c4c4" stroke-width="2.500" /></svg>
								{@render tri()}
							</button>
						</div>
					</div>
				</div>
				<div class="sep"></div>
				<div class="mat-gap"></div>
				<div class="sep"></div>
				<div class="add-wrap"><button class="add">Add Component</button></div>

				<div class="sep"></div>
				<div class="preview-bar">
					<span class="pv-stub"></span>
					<div class="pv-name"><span>TargetB</span>{@render tri()}</div>
					<div class="pv-lines"><i></i><i></i></div>
					<div class="pv-menu">{@render dots()}</div>
				</div>
				<div class="preview">
					<span>TargetB</span>
					<span>Image Size: 0x0</span>
				</div>
			</section>
		</div>
	</div>

	<footer class="status">
		<span class="st">
			<svg viewBox="0 0 30 30"><ellipse cx="15" cy="17" rx="9" ry="11" fill="#c4c4c4" /><circle cx="15" cy="6" r="4" fill="#c4c4c4" /><path d="M3 10l7 4M27 10l-7 4M1 18h7M29 18h-7M3 27l7-4M27 27l-7-4" stroke="#c4c4c4" stroke-width="2" /><path d="M2 1l26 28" stroke="#141414" stroke-width="4" /><path d="M3 1l26 28" stroke="#c4c4c4" stroke-width="1.800" /></svg>
		</span>
		<span class="st">
			<svg viewBox="0 0 30 30"><ellipse cx="15" cy="6" rx="13" ry="5" fill="#c4c4c4" /><path d="M2 9c3 5 23 5 26 0v5c-3 5-23 5-26 0zM2 17c3 5 23 5 26 0v6c-3 5-23 5-26 0z" fill="#c4c4c4" /><path d="M1 1l28 28" stroke="#141414" stroke-width="4" /><path d="M2 1l28 28" stroke="#c4c4c4" stroke-width="1.800" /></svg>
		</span>
		<span class="st">
			<svg viewBox="0 0 30 30" fill="none" stroke="#c4c4c4" stroke-width="1.800"><circle cx="15" cy="15" r="13.500" /><path d="M9 15l4.500 4L21 11" stroke-width="2.200" /></svg>
		</span>
	</footer>
</div>

<style>
	:global(body) {
		margin: 0;
		background: #e9e9e9;
	}

	.window {
		box-sizing: border-box;
		width: 2992px;
		height: 1934px;
		padding-top: 55px;
		background: linear-gradient(#ffffff 0, #f6f6f6 30px, #e2e2e2 55px, #e2e2e2 1900px, #777 1932px);
		display: flex;
		flex-direction: column;
		font-family: Inter, 'Liberation Sans', sans-serif;
		font-size: 24px;
		color: #c8c8c8;
		overflow: hidden;
	}

	.titlebar {
		flex: none;
		height: 55px;
		background: #141414;
		border-top: 2px solid #4a4a4a;
		box-sizing: border-box;
		border-radius: 22px 22px 0 0;
		display: flex;
		align-items: center;
		position: relative;
	}

	button {
		font: inherit;
		color: inherit;
		border: 0;
		padding: 0;
		margin: 0;
	}

	.lights {
		display: flex;
		gap: 16px;
		padding-left: 16px;
	}

	.light {
		width: 24px;
		height: 24px;
		border-radius: 50%;
		display: flex;
		align-items: center;
		justify-content: center;
	}

	.light.red {
		background: #ee6a5f;
	}

	.light.red i {
		width: 9px;
		height: 9px;
		border-radius: 50%;
		background: #8c1a10;
	}

	.light.yellow {
		background: #f5bd4f;
	}

	.light.green {
		background: #61c454;
	}

	.title {
		position: absolute;
		left: 934px;
		top: 9px;
		display: flex;
		align-items: center;
		gap: 13px;
		height: 34px;
		font-size: 26.500px;
		font-weight: 700;
		color: #9a9a9a;
		white-space: nowrap;
	}

	.doc {
		width: 23px;
		height: 31px;
	}

	.toolbar {
		flex: none;
		height: 74px;
		background: #141414;
		display: flex;
		align-items: center;
		position: relative;
		padding-bottom: 2px;
		box-sizing: border-box;
	}

	.tb-left {
		display: flex;
		align-items: center;
		padding-left: 18px;
	}

	.tb-left .tri {
		flex: none;
	}

	.logo {
		width: 33px;
		height: 41px;
	}

	.brand {
		margin-left: 9px;
		font-weight: 700;
		color: #e8e8e8;
	}

	.vsep {
		width: 2px;
		height: 26px;
		margin: 0 20px;
		background: #444;
	}

	.acct {
		width: 26px;
		height: 26px;
	}

	.acct-k {
		margin: 0 13px 0 11px;
	}

	.bag {
		width: 20px;
		height: 26px;
		margin-left: 37px;
	}

	.store {
		margin: 0 13px;
	}

	.archive {
		width: 24px;
		height: 22px;
		margin-left: 46px;
	}

	.graph {
		width: 26px;
		height: 22px;
		margin-left: 46px;
	}

	.play {
		position: absolute;
		left: 1402px;
		top: 18px;
		display: flex;
		gap: 3px;
	}

	.pb {
		width: 64px;
		height: 40px;
		background: #4f4f4f;
		display: flex;
		align-items: center;
		justify-content: center;
		border-radius: 0;
	}

	.pb:first-child {
		border-radius: 7px 0 0 7px;
	}

	.pb:last-child {
		border-radius: 0 7px 7px 0;
	}

	.pb.dim {
		background: #353535;
	}

	.pb svg {
		height: 22px;
		width: 18px;
		fill: #b2b2b2;
	}

	.pb.dim svg {
		width: 21px;
		fill: #8f8f8f;
	}

	.tb-right {
		margin-left: auto;
		display: flex;
		align-items: center;
		padding-right: 29px;
	}

	.cloud {
		width: 28px;
		height: 20px;
	}

	.hist {
		width: 26px;
		height: 26px;
		margin-left: 45px;
	}

	.mag {
		width: 26px;
		height: 26px;
		margin-left: 44px;
	}

	.layout {
		width: 24px;
		height: 24px;
		margin-left: 40px;
	}

	.lay-text {
		margin: 0 13px 0 14px;
	}

	.main {
		flex: none;
		height: 1706px;
		display: flex;
		background: #141414;
	}

	.col {
		display: flex;
		flex-direction: column;
	}

	.col-left {
		width: 1406px;
		gap: 4px;
	}

	.col-hier {
		width: 462px;
		margin-left: 4px;
		gap: 4px;
	}

	.col-proj {
		width: 468px;
		margin-left: 4px;
	}

	.col-insp {
		width: 644px;
		margin-left: 4px;
	}

	.panel {
		display: flex;
		flex-direction: column;
	}

	.scene {
		height: 838px;
	}

	.game {
		height: 864px;
	}

	.hier {
		height: 1176px;
	}

	.console {
		height: 526px;
	}

	.project,
	.insp {
		height: 1706px;
	}

	.tabrow {
		flex: none;
		height: 48px;
		display: flex;
		background: #141414;
	}

	.tab {
		height: 48px;
		background: #3c3c3c;
		border-radius: 8px 8px 0 0;
		display: flex;
		align-items: center;
		box-sizing: border-box;
		white-space: nowrap;
		color: #c4c4c4;
		padding-top: 1px;
	}

	.tab-scene {
		width: 152px;
		padding-left: 19px;
		gap: 11px;
	}

	.tab-game {
		width: 148px;
		padding-left: 16px;
		gap: 6px;
	}

	.tab-game .tab-ic {
		width: 28px;
		height: 16px;
	}

	.tab-hier {
		width: 192px;
		padding-left: 21px;
		gap: 10px;
	}

	.tab-console {
		width: 176px;
		padding-left: 21px;
		gap: 9px;
	}

	.tab-proj {
		width: 164px;
		padding-left: 20px;
		gap: 10px;
	}

	.tab-insp {
		width: 190px;
		padding-left: 20px;
		gap: 10px;
		border-top: 4px solid #3d6594;
	}

	.tab-ic {
		width: 20px;
		height: 20px;
		flex: none;
	}

	.tab-ic.small {
		width: 22px;
		height: 20px;
	}

	.tab-tools {
		margin-left: auto;
		display: flex;
		align-items: center;
		gap: 24px;
		padding-right: 23px;
		height: 48px;
	}

	.lock {
		width: 16px;
		height: 20px;
		fill: none;
		stroke: #c4c4c4;
		stroke-width: 2;
	}

	.dots {
		width: 6px;
		height: 20px;
		fill: #c4c4c4;
		flex: none;
	}

	.tri {
		width: 16px;
		height: 12px;
		fill: #bdbdbd;
		flex: none;
	}

	.arrow {
		width: 16px;
		height: 18px;
		fill: #6c6c6c;
		flex: none;
	}

	/* scene */
	.scene-tools {
		flex: none;
		height: 52px;
		background: #3c3c3c;
		display: flex;
		align-items: center;
		gap: 6px;
		padding-left: 11px;
		overflow: hidden;
		box-sizing: border-box;
	}

	.handle {
		flex: none;
		width: 8px;
		height: 36px;
		border-left: 2px solid #5a5a5a;
		border-right: 2px solid #5a5a5a;
		box-sizing: border-box;
		margin: 0 9px 0 8px;
	}

	.handle:first-child {
		margin: 0 6px 0 0;
	}

	.handle.tight {
		margin: 0 6px 0 13px;
		height: 32px;
	}

	.sb {
		flex: none;
		height: 40px;
		background: #585858;
		border-radius: 5px;
		display: flex;
		align-items: center;
		color: #c4c4c4;
		box-sizing: border-box;
	}

	.sb.on,
	.gb.on,
	.split.on {
		background: #46607c;
	}

	.w-center {
		width: 158px;
		padding-left: 8px;
		gap: 7px;
	}

	.w-local {
		width: 141px;
		padding-left: 8px;
		gap: 7px;
	}

	.w-center .tri {
		margin-left: 11px;
	}

	.w-local .tri {
		margin-left: 11px;
	}

	.pad-ic {
		width: 28px;
		height: 28px;
	}

	.num-input {
		flex: none;
		width: 73px;
		height: 40px;
		box-sizing: border-box;
		margin-left: 4px;
		background: #2a2a2a;
		border: 2px solid #212121;
		border-radius: 6px;
		padding-left: 8px;
		line-height: 36px;
	}

	.split {
		flex: none;
		height: 40px;
		background: #585858;
		border-radius: 5px;
		display: flex;
		overflow: hidden;
	}

	.ml3 {
		margin-left: 3px;
	}

	.ml1 {
		margin-left: 1px;
	}

	.w-snap {
		width: 74px;
	}

	.w-bug {
		width: 75px;
	}

	.w-lay {
		width: 72px;
	}

	.sp-main {
		width: 45px;
		display: flex;
		align-items: center;
		justify-content: center;
	}

	.sp-main.pl {
		width: 40px;
	}

	.sp-tri {
		flex: 1;
		display: flex;
		align-items: center;
		justify-content: center;
		border-left: 2px solid #3c3c3c;
	}

	.sp-tri.nosep {
		border: 0;
	}

	.on .sp-tri {
		border-left-color: #37506a;
	}

	.sq-ic {
		width: 26px;
		height: 28px;
	}

	.y {
		font: 700 14px Inter, sans-serif;
		fill: #f0f0f0;
		stroke: none;
	}

	.group {
		flex: none;
		display: flex;
		gap: 2px;
		border-radius: 5px;
		overflow: hidden;
	}

	.gb {
		width: 64px;
		height: 40px;
		background: #585858;
		display: flex;
		align-items: center;
		justify-content: center;
	}

	.sq {
		width: 64px;
		justify-content: center;
	}

	.sb-text {
		color: #f0f0f0;
		font-size: 21px;
		font-weight: 600;
	}

	.canvas {
		flex: none;
		height: 738px;
		background: #474747;
		position: relative;
		overflow: hidden;
	}

	.gridsvg {
		display: block;
		width: 1406px;
		height: 738px;
	}

	.minor {
		stroke: #4d4d4d;
		stroke-width: 1;
	}

	.major {
		stroke: #6e6e6e;
		stroke-width: 1;
	}

	.axis {
		stroke: #858585;
		stroke-width: 1;
	}

	.vtools {
		position: absolute;
		left: 4px;
		top: 4px;
		width: 86px;
		height: 291px;
		box-sizing: border-box;
		background: #0e0e0e;
		border-radius: 8px;
		padding: 0 6px;
		display: flex;
		flex-direction: column;
		gap: 2px;
	}

	.grip {
		height: 33px;
		position: relative;
		flex: none;
		margin: 0 21px;
		box-sizing: border-box;
		background: linear-gradient(#0000 7px, #666 7px, #666 9px, #0000 9px, #0000 12px, #666 12px, #666 14px, #0000 14px);
		top: 2px;
	}

	.vt {
		flex: none;
		height: 40px;
		background: #585858;
		display: flex;
		align-items: center;
		justify-content: center;
	}

	.vt:nth-child(2) {
		border-radius: 6px 6px 0 0;
	}

	.vt:last-child {
		border-radius: 0 0 6px 6px;
	}

	.vt.on {
		background: #46607c;
	}

	.vt svg {
		width: 30px;
		height: 30px;
	}

	.htools {
		position: absolute;
		left: 4px;
		top: 682px;
		height: 52px;
		width: 563px;
		box-sizing: border-box;
		background: #0e0e0e;
		border-radius: 8px;
		display: flex;
		align-items: center;
		gap: 2px;
	}

	.ht {
		flex: none;
		width: 64px;
		height: 40px;
		background: #585858;
		display: flex;
		align-items: center;
		justify-content: center;
	}

	.ht.on {
		background: #46607c;
	}

	.ht svg {
		width: 28px;
		height: 29px;
	}

	.ht:nth-child(2) {
		border-radius: 5px 0 0 5px;
	}

	.ht:last-child {
		border-radius: 0 5px 5px 0;
	}

	/* game */
	.game-tools {
		flex: none;
		height: 42px;
		background: #3c3c3c;
		border-bottom: 2px solid #262626;
		box-sizing: border-box;
		display: flex;
		overflow: hidden;
	}

	.gt {
		flex: none;
		height: 40px;
		display: flex;
		align-items: center;
		border-right: 2px solid #2a2a2a;
		box-sizing: border-box;
		white-space: nowrap;
		padding-top: 1px;
	}

	.gt .tri {
		margin-left: auto;
	}

	.g-game {
		width: 181px;
		padding: 1px 10px 0 8px;
	}

	.g-display {
		width: 172px;
		padding: 1px 10px 0 19px;
	}

	.g-aspect {
		width: 320px;
		padding: 1px 9px 0 7px;
	}

	.g-scale {
		width: 242px;
		padding: 1px 0 0 13px;
	}

	.g-focus {
		width: 220px;
		padding: 1px 9px 0 7px;
	}

	.g-ic {
		width: 52px;
		justify-content: center;
	}

	.g-stats {
		width: 80px;
		padding-left: 11px;
	}

	.g-giz {
		width: 60px;
		padding-left: 8px;
		border: 0;
		overflow: hidden;
	}

	.slider {
		width: 52px;
		height: 8px;
		margin: 0 14px 0 12px;
		background: #5a5a5a;
		border-radius: 4px;
		display: flex;
		align-items: center;
	}

	.slider i {
		width: 20px;
		height: 20px;
		border-radius: 50%;
		background: #9b9b9b;
		flex: none;
	}

	.mini-ic {
		width: 26px;
		height: 20px;
	}

	.gameview {
		flex: 1;
		background: #374b75;
		display: flex;
		justify-content: space-between;
		align-items: flex-end;
		padding: 0 124px 102px 72px;
	}

	.gbox {
		width: 200px;
		height: 199px;
	}

	.gbox.white {
		background: #fff;
	}

	.gbox.coral {
		background: #ef7370;
	}

	/* hierarchy / project */
	.tree-tools {
		flex: none;
		height: 40px;
		background: #3c3c3c;
		display: flex;
		align-items: center;
		padding-left: 14px;
	}

	.tree-tools .tri {
		margin-left: 6px;
	}

	.plus {
		width: 24px;
		height: 24px;
		fill: #c8c8c8;
		flex: none;
	}

	.searchbox {
		margin-left: 25px;
		width: 368px;
		height: 30px;
		box-sizing: border-box;
		border: 2px solid #212121;
		background: #2a2a2a;
		border-radius: 8px;
		display: flex;
		align-items: center;
		padding-left: 8px;
		color: #7c7c7c;
		overflow: hidden;
		flex: none;
	}

	.searchbox.short {
		width: 165px;
	}

	.ticon {
		width: 14px;
		height: 14px;
		fill: none;
		stroke: #b0b0b0;
		stroke-width: 2;
		flex: none;
	}

	.tinytri {
		width: 6px;
		height: 6px;
		fill: #b0b0b0;
		margin-left: 1px;
	}

	.ph {
		margin-left: 7px;
	}

	.sb-end {
		margin-left: auto;
		width: 34px;
		height: 30px;
		background: #3a3a3a;
		display: flex;
		align-items: center;
		justify-content: center;
	}

	.expand {
		width: 24px;
		height: 24px;
		fill: none;
		stroke: #c4c4c4;
		stroke-width: 1.800;
	}

	.pj-ic {
		flex: none;
		width: 51px;
		height: 40px;
		margin-left: 2px;
		display: flex;
		align-items: center;
		justify-content: center;
		box-sizing: border-box;
		border-left: 2px solid #2e2e2e;
	}

	.pj-ic.first {
		margin-left: 7px;
	}

	.pj-ic svg {
		width: 24px;
		height: 26px;
	}

	.pj-ic.eye {
		width: 49px;
	}

	.hier-tree {
		flex: 1;
		border-top: 1px solid #2a2a2a;
		background: linear-gradient(90deg, #303030 63px, #383838 63px);
	}

	.scene-row {
		height: 32px;
		background: #2e2e2e;
		display: flex;
		align-items: center;
		padding-left: 68px;
		box-sizing: border-box;
	}

	.scene-row b {
		font-weight: 600;
		margin-left: 8px;
		color: #d2d2d2;
	}

	.scene-row .dots {
		margin-left: auto;
		margin-right: 22px;
	}

	.scene-ic {
		width: 28px;
		height: 30px;
		margin-left: 10px;
		flex: none;
	}

	.hrow {
		height: 32px;
		display: flex;
		align-items: center;
		gap: 0;
		white-space: nowrap;
	}

	.hrow.d1 {
		padding-left: 91px;
	}

	.hrow.d2 {
		padding-left: 119px;
	}

	.hrow.selected {
		background: linear-gradient(90deg, #464646 63px, #4d4d4d 63px);
	}

	.hrow span:last-child {
		margin-left: 8px;
	}

	.arrow-box {
		flex: none;
		width: 30px;
		height: 22px;
		display: flex;
		justify-content: center;
		align-items: center;
	}

	.cube {
		width: 28px;
		height: 30px;
		fill: none;
		stroke: #c4c4c4;
		stroke-width: 1.800;
		flex: none;
	}

	.proj-tree {
		flex: 1;
		border-top: 1px solid #2a2a2a;
		background: #383838;
		padding-top: 8px;
		overflow: hidden;
	}

	.prow-t {
		height: 32px;
		display: flex;
		align-items: center;
		white-space: nowrap;
	}

	.prow-t.top {
		padding-left: 1px;
	}

	.prow-t.sub {
		padding-left: 31px;
	}

	.prow-t b {
		font-weight: 600;
		margin-left: 7px;
		color: #d2d2d2;
	}

	.prow-t.top .ficon {
		margin-left: 5px;
	}

	.prow-t.sub span:last-child {
		margin-left: 8px;
	}

	.ficon {
		width: 28px;
		height: 21px;
		fill: #c8c8c8;
		flex: none;
	}

	.asset-ic {
		width: 28px;
		height: 28px;
		flex: none;
	}

	.proj-bottom {
		flex: none;
		height: 43px;
		background: #3c3c3c;
		border-top: 1px solid #2e2e2e;
		box-sizing: border-box;
	}

	/* console */
	.console-tools {
		flex: none;
		height: 42px;
		background: #3c3c3c;
		border-bottom: 2px solid #2a2a2a;
		box-sizing: border-box;
		display: flex;
	}

	.ct {
		height: 40px;
		display: flex;
		align-items: center;
		flex: none;
		box-sizing: border-box;
		border-right: 2px solid #2a2a2a;
		white-space: nowrap;
		padding-top: 1px;
	}

	.c-clear {
		width: 112px;
		padding-left: 8px;
	}

	.c-clear i {
		width: 1px;
		height: 24px;
		background: #2a2a2a;
		margin: 0 9px;
		flex: none;
	}

	.c-coll {
		width: 118px;
		padding-left: 11px;
	}

	.c-gap {
		width: 28px;
	}

	.c-on {
		width: 68px;
		background: #585858;
		padding-left: 12px;
		gap: 7px;
		color: #c4c4c4;
	}

	.log-ic {
		width: 26px;
		height: 27px;
		flex: none;
	}

	.console-list {
		flex: none;
		height: 305px;
		background: #383838;
		border-bottom: 2px solid #2e2e2e;
	}

	.console-detail {
		flex: 1;
		background: #383838;
	}

	/* inspector */
	.insp {
		background: #383838;
	}

	.obj-head {
		flex: none;
		height: 119px;
		box-sizing: border-box;
		background: #3c3c3c;
		display: flex;
		padding-top: 18px;
	}

	.obj-cube {
		width: 54px;
		height: 56px;
		flex: none;
		margin: 3px 11px 0 16px;
	}

	.obj-fields {
		flex: 1;
	}

	.obj-row {
		display: flex;
		align-items: center;
		height: 36px;
		padding-left: 9px;
	}

	.obj-row .tri {
		margin-left: auto;
		margin-right: 13px;
	}

	.obj-row.second {
		padding-left: 0;
		margin-top: 12px;
	}

	.cb {
		flex: none;
		width: 28px;
		height: 28px;
		background: #2a2a2a;
		border: 2px solid #212121;
		border-radius: 5px;
		box-sizing: border-box;
		display: flex;
		align-items: center;
		justify-content: center;
	}

	.cb.empty {
		background: #383838;
		border-color: #2e2e2e;
		margin-left: 8px;
	}

	.check {
		width: 26px;
		height: 26px;
		flex: none;
		fill: none;
		stroke: #f4f4f4;
		stroke-width: 2.600;
	}

	.name-input {
		flex: none;
		width: 352px;
		height: 36px;
		margin-left: 13px;
		box-sizing: border-box;
		background: #2a2a2a;
		border: 2px solid #212121;
		border-radius: 6px;
		font-weight: 500;
		line-height: 33px;
		padding-left: 4px;
		color: #e0e0e0;
	}

	.static {
		margin-left: 8px;
	}

	.lbl-tag {
		width: 49px;
		flex: none;
	}

	.lbl-layer {
		flex: none;
		width: 72px;
		margin-left: 25px;
	}

	.dd {
		flex: none;
		height: 34px;
		background: #515151;
		border-radius: 6px;
		box-sizing: border-box;
		display: flex;
		align-items: center;
		padding: 0 7px 0 5px;
		border: 1px solid #303030;
	}

	.obj-row .dd .tri,
	.dd .tri {
		margin: 0 0 0 auto;
	}

	.dd-tag {
		width: 215px;
	}

	.dd-layer {
		width: 192px;
	}

	.sep {
		flex: none;
		height: 2px;
		background: #1f1f1f;
	}

	.chead {
		flex: none;
		height: 40px;
		background: #3e3e3e;
		border-bottom: 1px solid #333;
		box-sizing: border-box;
		display: flex;
		align-items: center;
		padding-left: 13px;
	}

	.comp-ic {
		width: 30px;
		height: 24px;
		margin-left: 12px;
		flex: none;
	}

	.ctitle {
		font-weight: 600;
		margin-left: 12px;
		color: #d2d2d2;
	}

	.ctitle.gap-noc {
		margin-left: 50px;
	}

	.cb.inhead {
		margin-left: 10px;
	}

	.cicons {
		margin-left: auto;
		display: flex;
		align-items: center;
		gap: 20px;
		padding-right: 23px;
	}

	.cicons .dots {
		margin-left: 8px;
	}

	.help {
		width: 20px;
		height: 20px;
		flex: none;
		fill: #c8c8c8;
	}

	.help text {
		font: 700 17px Inter, sans-serif;
		fill: #3c3c3c;
	}

	.sliders {
		width: 20px;
		height: 20px;
		flex: none;
		fill: none;
		stroke: #c4c4c4;
		stroke-width: 2.800;
	}

	.rect-body {
		box-sizing: border-box;
		height: 352px;
		padding-top: 16px;
	}

	.rect-top {
		display: flex;
		height: 141px;
	}

	.preset {
		flex: none;
		width: 255px;
		display: flex;
		padding-left: 16px;
		box-sizing: border-box;
	}

	.middle {
		writing-mode: vertical-rl;
		transform: rotate(180deg);
		font-size: 22px;
		height: 96px;
		width: 24px;
		text-align: center;
		margin-top: 33px;
		flex: none;
	}

	.preset-col {
		display: flex;
		flex-direction: column;
		align-items: center;
		margin-left: 14px;
		width: 70px;
		gap: 7px;
	}

	.center {
		font-size: 20px;
		height: 35px;
		line-height: 35px;
	}

	.anchor {
		width: 70px;
		height: 70px;
		flex: none;
	}

	.pos-grid {
		display: grid;
		grid-template-columns: 124px 124px 124px;
		grid-template-rows: 35px 35px 36px 35px;
		column-gap: 4.500px;
	}

	.pos-grid > span {
		padding-left: 2px;
		line-height: 35px;
	}

	.field {
		box-sizing: border-box;
		height: 35px;
		background: #2a2a2a;
		border: 2px solid #212121;
		border-radius: 6px;
		line-height: 31px;
		padding-left: 5px;
		font-size: 24px;
		color: #d4d4d4;
	}

	.blueprint {
		display: flex;
		gap: 2px;
		padding-left: 22px;
		margin-top: -2px;
	}

	.bp {
		width: 47px;
		height: 36px;
		background: #585858;
		border-radius: 5px 0 0 5px;
		display: flex;
		align-items: center;
		justify-content: center;
		flex: none;
		color: #858585;
		font-size: 20px;
	}

	.bp.r {
		width: 51px;
		border-radius: 0 5px 5px 0;
	}

	.bp svg {
		width: 20px;
		height: 24px;
	}

	.prow {
		height: 40px;
		display: flex;
		align-items: center;
		padding-left: 39px;
		white-space: nowrap;
	}

	.prow.anchors {
		margin-top: 3px;
		padding-left: 15px;
	}

	.prow.anchors span {
		margin-left: 8px;
	}

	.prow.rot {
		margin-top: 16px;
	}

	.plabel {
		flex: none;
		width: 216px;
		display: flex;
		justify-content: space-between;
		align-items: center;
	}

	.chain {
		width: 26px;
		height: 22px;
		margin-right: 13px;
	}

	.xl {
		flex: none;
		width: 34px;
		text-align: center;
		box-sizing: border-box;
	}

	.xl.small {
		width: 22px;
	}

	.xl.next {
		margin-left: 6px;
	}

	.xl.small.next {
		margin-left: 8px;
	}

	.f100 {
		width: 100px;
	}

	.f88 {
		width: 88px;
	}

	.f89 {
		width: 89px;
	}

	.cr-body {
		box-sizing: border-box;
		height: 65px;
		display: flex;
		padding: 14px 0 0 39px;
		align-items: flex-start;
	}

	.cull {
		flex: none;
		width: 238px;
		overflow: hidden;
		white-space: nowrap;
		height: 28px;
		line-height: 27px;
		margin-right: 3px;
	}

	.img-body {
		height: 265px;
		box-sizing: border-box;
		padding-top: 7px;
	}

	.irow {
		display: grid;
		grid-template-columns: 241px 356px;
		align-items: center;
		height: 40px;
		padding-left: 39px;
		white-space: nowrap;
	}

	.irow.foldrow {
		display: flex;
		padding-left: 15px;
	}

	.irow.foldrow span {
		margin-left: 8px;
	}

	.irow.mask {
		margin-top: 4px;
	}

	.objfield {
		height: 35px;
		box-sizing: border-box;
		border: 2px solid #212121;
		border-radius: 6px;
		background: #2a2a2a;
		display: flex;
		overflow: hidden;
		align-items: center;
	}

	.val {
		padding-left: 4px;
		color: #909090;
		flex: 1;
	}

	.pick {
		flex: none;
		width: 37px;
		height: 100%;
		background: #3c3c3c;
		display: flex;
		align-items: center;
		justify-content: center;
	}

	.target {
		width: 20px;
		height: 20px;
		fill: none;
		stroke: #c4c4c4;
		stroke-width: 2;
	}

	.target .pt {
		fill: #c4c4c4;
		stroke: none;
	}

	.objfield.color {
		align-items: stretch;
	}

	.swatch {
		flex: 1;
		background: #ef7370;
		display: flex;
		align-items: flex-end;
	}

	.swatch i {
		display: block;
		height: 6px;
		width: 100%;
		background: #fff;
	}

	.mat {
		flex: none;
		height: 109px;
		background: #3a3a3a;
		display: flex;
	}

	.mat-left {
		flex: none;
		width: 112px;
		display: flex;
		padding-left: 13px;
		box-sizing: border-box;
	}

	.mat-left .arrow {
		align-self: flex-end;
		margin-bottom: 13px;
	}

	.thumb {
		flex: none;
		margin: 12px 0 0 3px;
		width: 64px;
		height: 64px;
		background: #525252;
		display: flex;
		align-items: center;
		justify-content: center;
	}

	.thumb i {
		display: block;
		width: 48px;
		height: 48px;
		background: #fff;
	}

	.mat-right {
		flex: 1;
		min-width: 0;
		padding-top: 10px;
	}

	.mat-title {
		display: flex;
		align-items: center;
		height: 32px;
		color: #8e8e8e;
		white-space: nowrap;
	}

	.mat-title .cicons {
		padding-right: 13px;
	}

	.mat-title .cicons .dots {
		margin-left: 0;
	}

	.mat-shader {
		display: flex;
		align-items: center;
		margin: 15px 0 0 -6px;
		height: 35px;
	}

	.sh-label {
		width: 104px;
		flex: none;
		color: #808080;
	}

	.sh-dd {
		width: 232px;
		background: #454545;
		color: #858585;
		border-color: #3a3a3a;
	}

	.sh-dd .tri {
		fill: #858585;
	}

	.edit {
		flex: none;
		width: 88px;
		height: 34px;
		margin-left: 10px;
		background: #565656;
		border: 2px solid #2c2c2c;
		border-radius: 6px;
		box-sizing: border-box;
		color: #d4d4d4;
	}

	.listb {
		width: 87px;
		margin-left: 9px;
		background: #484848;
		display: flex;
		align-items: center;
		justify-content: space-between;
		padding: 0 10px 0 16px;
	}

	.listb svg {
		width: 22px;
		height: 18px;
		flex: none;
	}

	.mat-gap {
		flex: none;
		height: 20px;
	}

	.add-wrap {
		flex: none;
		height: 118px;
		padding-top: 17px;
		box-sizing: border-box;
		display: flex;
		justify-content: center;
		align-items: flex-start;
	}

	.add {
		width: 456px;
		height: 44px;
		background: #585858;
		border-radius: 5px;
		border-bottom: 1px solid #2a2a2a;
		color: #d2d2d2;
	}

	.preview-bar {
		flex: none;
		height: 41px;
		background: #3c3c3c;
		border-bottom: 2px solid #2a2a2a;
		box-sizing: border-box;
		display: flex;
		align-items: stretch;
	}

	.pv-stub {
		flex: none;
		width: 8px;
		border-right: 2px solid #2a2a2a;
	}

	.pv-name {
		flex: none;
		width: 128px;
		box-sizing: border-box;
		border-right: 2px solid #2a2a2a;
		display: flex;
		align-items: center;
		padding-left: 7px;
		gap: 7px;
	}

	.pv-lines {
		flex: 1;
		display: flex;
		flex-direction: column;
		justify-content: center;
		gap: 4px;
		padding: 0 5px 0 7px;
	}

	.pv-lines i {
		display: block;
		height: 2px;
		background: #636363;
	}

	.pv-menu {
		flex: none;
		width: 33px;
		border-left: 2px solid #2a2a2a;
		box-sizing: border-box;
		display: flex;
		align-items: center;
		justify-content: center;
	}

	.preview {
		flex: 1;
		background: #313131;
		display: flex;
		flex-direction: column;
		justify-content: flex-end;
		align-items: center;
		padding-bottom: 10px;
		line-height: 29px;
		font-weight: 500;
		color: #dcdcdc;
		text-shadow: 1px 2px 2px #000;
	}

	.status {
		flex: none;
		height: 42px;
		background: #141414;
		border-radius: 0 0 22px 22px;
		display: flex;
		justify-content: flex-end;
		padding-right: 1px;
	}

	.st {
		flex: none;
		width: 52px;
		height: 38px;
		margin-top: 4px;
		border-left: 1px solid #2a2a2a;
		box-sizing: border-box;
		display: flex;
		align-items: center;
		justify-content: center;
	}

	.st svg {
		width: 30px;
		height: 30px;
	}
</style>
